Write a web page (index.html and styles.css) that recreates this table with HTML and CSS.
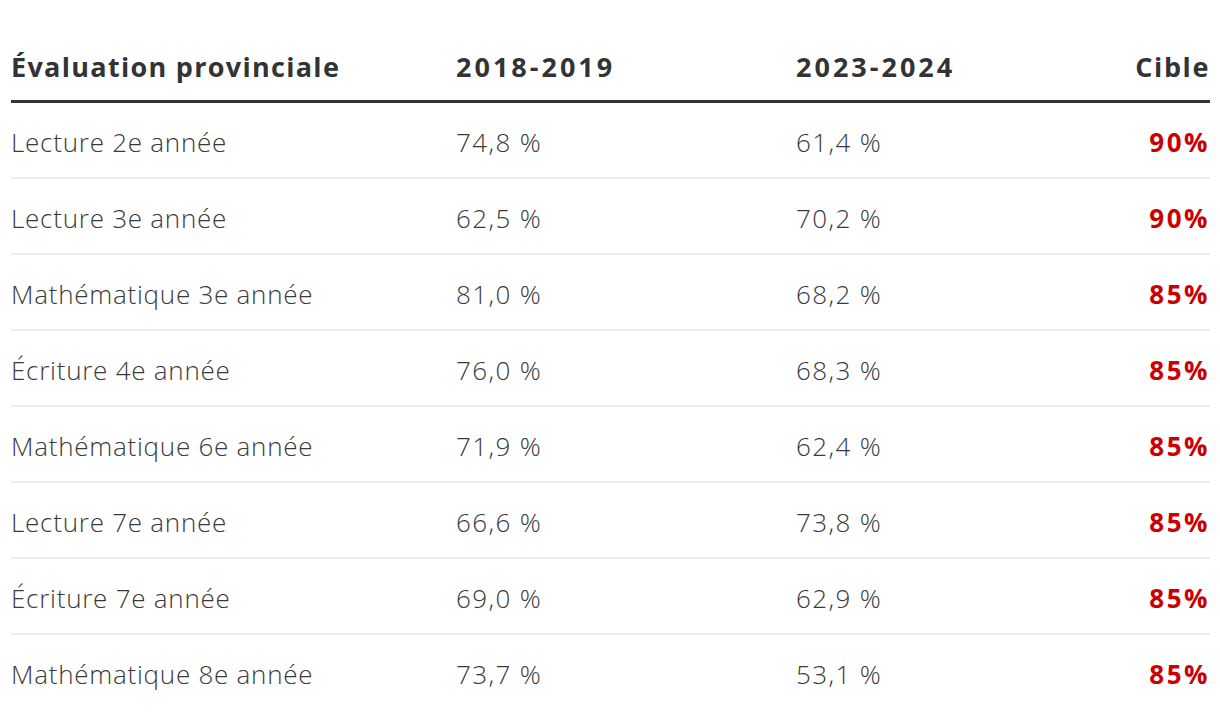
FILE: index.html
```html
<!DOCTYPE html>
<html lang="fr">
<head>
<meta charset="utf-8">
<link rel="stylesheet" href="styles.css">
</head>
<body>
<table class="tbl">
  <thead>
    <tr>
      <th class="c1">Évaluation provinciale</th>
      <th class="c2 year">2018-2019</th>
      <th class="c3 year">2023-2024</th>
      <th class="c4">Cible</th>
    </tr>
  </thead>
  <tbody>
    <tr><td>Lecture 2e année</td><td class="num">74,8 %</td><td class="num">61,4 %</td><td class="target">90%</td></tr>
    <tr><td>Lecture 3e année</td><td class="num">62,5 %</td><td class="num">70,2 %</td><td class="target">90%</td></tr>
    <tr><td>Mathématique 3e année</td><td class="num">81,0 %</td><td class="num">68,2 %</td><td class="target">85%</td></tr>
    <tr><td>Écriture 4e année</td><td class="num">76,0 %</td><td class="num">68,3 %</td><td class="target">85%</td></tr>
    <tr><td>Mathématique 6e année</td><td class="num">71,9 %</td><td class="num">62,4 %</td><td class="target">85%</td></tr>
    <tr><td>Lecture 7e année</td><td class="num">66,6 %</td><td class="num">73,8 %</td><td class="target">85%</td></tr>
    <tr><td>Écriture 7e année</td><td class="num">69,0 %</td><td class="num">62,9 %</td><td class="target">85%</td></tr>
    <tr><td>Mathématique 8e année</td><td class="num">73,7 %</td><td class="num">53,1 %</td><td class="target">85%</td></tr>
  </tbody>
</table>
</body>
</html>
```
FILE: styles.css
```css
html, body {
  margin: 0;
  padding: 0;
  background: #fff;
}
body {
  padding: 0 10px 0 11px;
  font-family: "Open Sans", "Lato", sans-serif;
  color: #3a3a3a;
}
.tbl {
  width: 1199px;
  border-collapse: collapse;
  table-layout: fixed;
}
.tbl th {
  font-weight: 700;
  font-size: 27px;
  line-height: 32px;
  letter-spacing: 1.3px;
  color: #333;
  text-align: left;
  padding: 51px 0 17px 0;
  border-bottom: 3px solid #333;
}
.tbl .c1 { width: 445px; }
.tbl .c2 { width: 340px; }
.tbl th.year { letter-spacing: 3px; }
.tbl .c4 { text-align: right; width: 200px; letter-spacing: 1.6px; }
.tbl td {
  font-weight: 300;
  font-size: 26px;
  line-height: 30px;
  letter-spacing: 0.75px;
  padding: 24px 0 20px 0;
  border-bottom: 2px solid #ebebeb;
  color: #3a3a3a;
}
.tbl td.num { letter-spacing: 1.4px; }
.tbl tbody tr:last-child td { border-bottom: none; }
.tbl td.target {
  text-align: right;
  font-weight: 700;
  letter-spacing: 2.5px;
  color: #cc0000;
}
```
